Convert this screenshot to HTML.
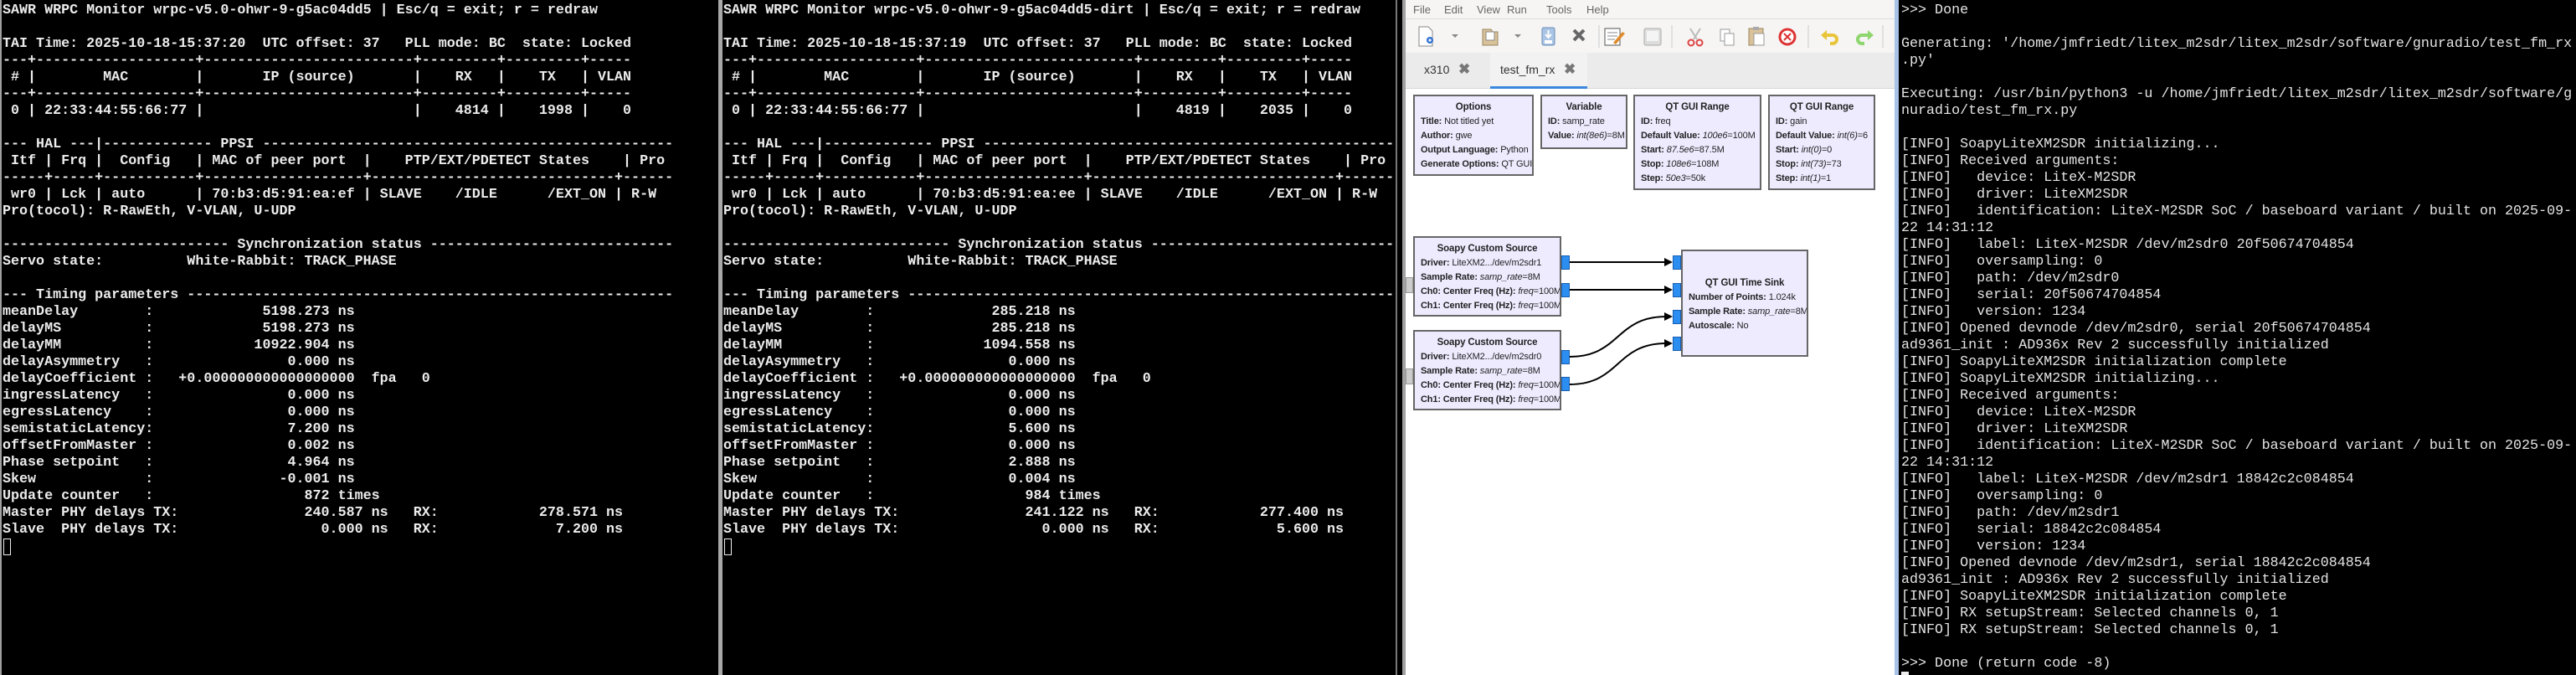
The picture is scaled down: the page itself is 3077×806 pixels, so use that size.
<!DOCTYPE html>
<html><head><meta charset="utf-8">
<style>
*{margin:0;padding:0;box-sizing:border-box}
html,body{width:3077px;height:806px;overflow:hidden;background:#000}
.abs{position:absolute}
pre.t{position:absolute;top:3px;font-family:"Liberation Mono",monospace;font-size:16.7px;line-height:20px;color:#ececec;white-space:pre}
pre.b{font-weight:bold}
.gr{position:absolute;left:1679px;top:0;width:584px;height:806px;background:#fff;font-family:"Liberation Sans",sans-serif}
.menu{position:absolute;left:0;top:0;width:584px;height:23px;background:#f6f5f4;border-bottom:1px solid #ddd;font-size:13px;color:#666}
.menu span{position:absolute;top:4px}
.tool{position:absolute;left:0;top:23px;width:584px;height:40px;background:#f6f5f4}
.tabs{position:absolute;left:0;top:63px;width:584px;height:43px;background:#ebebeb;border-bottom:1px solid #d6d6d6}
.blk{position:absolute;background:#efebff;border:2px solid #666;font-family:"Liberation Sans",sans-serif;font-size:11px;letter-spacing:-0.15px;color:#222;line-height:17px;padding:5px 0 0 7px;white-space:nowrap;overflow:hidden}
.blk .h{text-align:center;font-weight:bold;margin-left:-7px;font-size:11.5px}
.blk b{font-weight:bold}
.port{position:absolute;width:10px;height:17px;background:#2b8ef0;border:1px solid #1a5eb0}
</style></head><body>
<div class="abs" style="left:0;top:0;width:2px;height:806px;background:#a0a0a0"></div>
<pre class="t b" style="left:3px">SAWR WRPC Monitor wrpc-v5.0-ohwr-9-g5ac04dd5 | Esc/q = exit; r = redraw

TAI Time: 2025-10-18-15:37:20  UTC offset: 37   PLL mode: BC  state: Locked
---+-------------------+-------------------------+---------+---------+-----
 # |        MAC        |       IP (source)       |    RX   |    TX   | VLAN
---+-------------------+-------------------------+---------+---------+-----
 0 | 22:33:44:55:66:77 |                         |    4814 |    1998 |    0

--- HAL ---|------------- PPSI -------------------------------------------------
 Itf | Frq |  Config   | MAC of peer port  |    PTP/EXT/PDETECT States    | Pro
-----+-----+-----------+-------------------+-----------------------------+------
 wr0 | Lck | auto      | 70:b3:d5:91:ea:ef | SLAVE    /IDLE      /EXT_ON | R-W
Pro(tocol): R-RawEth, V-VLAN, U-UDP

--------------------------- Synchronization status -----------------------------
Servo state:          White-Rabbit: TRACK_PHASE

--- Timing parameters ----------------------------------------------------------
meanDelay        :             5198.273 ns
delayMS          :             5198.273 ns
delayMM          :            10922.904 ns
delayAsymmetry   :                0.000 ns
delayCoefficient :   +0.000000000000000000  fpa   0
ingressLatency   :                0.000 ns
egressLatency    :                0.000 ns
semistaticLatency:                7.200 ns
offsetFromMaster :                0.002 ns
Phase setpoint   :                4.964 ns
Skew             :               -0.001 ns
Update counter   :                  872 times
Master PHY delays TX:               240.587 ns   RX:            278.571 ns
Slave  PHY delays TX:                 0.000 ns   RX:              7.200 ns</pre>
<div class="abs" style="left:4px;top:643px;width:9px;height:20px;border:1.5px solid #eee"></div>
<div class="abs" style="left:858px;top:0;width:5px;height:806px;background:#a8a8a8"></div>
<pre class="t b" style="left:864px">SAWR WRPC Monitor wrpc-v5.0-ohwr-9-g5ac04dd5-dirt | Esc/q = exit; r = redraw

TAI Time: 2025-10-18-15:37:19  UTC offset: 37   PLL mode: BC  state: Locked
---+-------------------+-------------------------+---------+---------+-----
 # |        MAC        |       IP (source)       |    RX   |    TX   | VLAN
---+-------------------+-------------------------+---------+---------+-----
 0 | 22:33:44:55:66:77 |                         |    4819 |    2035 |    0

--- HAL ---|------------- PPSI -------------------------------------------------
 Itf | Frq |  Config   | MAC of peer port  |    PTP/EXT/PDETECT States    | Pro
-----+-----+-----------+-------------------+-----------------------------+------
 wr0 | Lck | auto      | 70:b3:d5:91:ea:ee | SLAVE    /IDLE      /EXT_ON | R-W
Pro(tocol): R-RawEth, V-VLAN, U-UDP

--------------------------- Synchronization status -----------------------------
Servo state:          White-Rabbit: TRACK_PHASE

--- Timing parameters ----------------------------------------------------------
meanDelay        :              285.218 ns
delayMS          :              285.218 ns
delayMM          :             1094.558 ns
delayAsymmetry   :                0.000 ns
delayCoefficient :   +0.000000000000000000  fpa   0
ingressLatency   :                0.000 ns
egressLatency    :                0.000 ns
semistaticLatency:                5.600 ns
offsetFromMaster :                0.000 ns
Phase setpoint   :                2.888 ns
Skew             :                0.004 ns
Update counter   :                  984 times
Master PHY delays TX:               241.122 ns   RX:            277.400 ns
Slave  PHY delays TX:                 0.000 ns   RX:              5.600 ns</pre>
<div class="abs" style="left:865px;top:643px;width:9px;height:20px;border:1.5px solid #eee"></div>
<div class="abs" style="left:1667px;top:0;width:2px;height:806px;background:#777"></div>
<div class="abs" style="left:1675px;top:0;width:4px;height:806px;background:#a0a0a0"></div>

<div class="gr">
 <div class="menu"><span style="left:9px">File</span><span style="left:46px">Edit</span><span style="left:85px">View</span><span style="left:121px">Run</span><span style="left:168px">Tools</span><span style="left:216px">Help</span></div>
 <div class="tool">
  <svg width="584" height="40" style="position:absolute;left:0;top:0">
   <path d="M16,9 h11 l5,5 v18 h-16z" fill="#fff" stroke="#888"/><circle cx="29" cy="25" r="4" fill="#2f6fd0"/><path d="M27,25h4M29,23v4" stroke="#fff" stroke-width="1.3"/>
   <path d="M55,18 l4,4 4,-4z" fill="#888"/>
   <path d="M92,12 h10 l2,3 h6 v16 h-18z" fill="#d9c29a" stroke="#9a8660"/><rect x="96" y="15" width="10" height="10" fill="#fff" stroke="#888"/>
   <path d="M130,18 l4,4 4,-4z" fill="#888"/>
   <rect x="163" y="10" width="15" height="21" rx="2" fill="#a9c4e4" stroke="#6a8bb3"/><path d="M170.5,13v8M167,18l3.5,4 3.5,-4" stroke="#fff" stroke-width="2" fill="none"/><rect x="166" y="25" width="9" height="4" fill="#fff"/>
   <path d="M201,13 l12,12 M213,13 l-12,12" stroke="#666" stroke-width="4"/>
   <path d="M231,7v27" stroke="#ccc"/>
   <rect x="238" y="11" width="18" height="20" fill="#fff" stroke="#555"/><path d="M241,16h12M241,20h12M241,24h9" stroke="#888"/><path d="M248,28 l11,-13 3,2 -11,13z" fill="#e08a2c"/>
   <rect x="285" y="11" width="20" height="20" rx="2" fill="#ddd" stroke="#aaa"/><rect x="288" y="14" width="14" height="12" fill="#f4f4f4"/>
   <path d="M318,7v27" stroke="#ccc"/>
   <path d="M340,11 l8,13 M352,11 l-8,13" stroke="#bbb" stroke-width="2"/><circle cx="341" cy="28" r="3.5" fill="none" stroke="#d44" stroke-width="2"/><circle cx="351" cy="28" r="3.5" fill="none" stroke="#d44" stroke-width="2"/>
   <rect x="376" y="12" width="11" height="14" fill="#fff" stroke="#999"/><rect x="381" y="17" width="11" height="14" fill="#fff" stroke="#999"/>
   <rect x="410" y="11" width="17" height="20" fill="#d9c29a" stroke="#9a8660"/><rect x="415" y="9" width="7" height="4" fill="#aaa"/><rect x="416" y="17" width="12" height="14" fill="#fff" stroke="#999"/>
   <circle cx="456" cy="21" r="9" fill="#fff" stroke="#d33" stroke-width="3"/><path d="M452,17l8,8M460,17l-8,8" stroke="#d33" stroke-width="2"/>
   <path d="M481,7v27" stroke="#ccc"/>
   <path d="M500,19 h10 a5,5 0 0 1 0,10 h-3" fill="none" stroke="#e8c53a" stroke-width="4"/><path d="M496,19 l7,-6 v12z" fill="#e8c53a"/>
   <path d="M555,19 h-10 a5,5 0 0 0 0,10 h3" fill="none" stroke="#8fd66e" stroke-width="4"/><path d="M559,19 l-7,-6 v12z" fill="#8fd66e"/>
   <path d="M570,7v27" stroke="#ccc"/>
  </svg>
 </div>
 <div class="tabs">
  <span class="abs" style="left:22px;top:12px;font-size:14px;color:#333">x310</span>
  <span class="abs" style="left:63px;top:10px;font-size:17px;color:#777;font-weight:bold">✖</span>
  <div class="abs" style="left:101px;top:0;width:116px;height:43px;background:#f2f2f2;border-bottom:3px solid #3a87dd"></div>
  <span class="abs" style="left:113px;top:12px;font-size:14px;color:#333">test_fm_rx</span>
  <span class="abs" style="left:189px;top:10px;font-size:17px;color:#777;font-weight:bold">✖</span>
 </div>
</div>
<div class="blk" style="left:1688px;top:113px;width:144px;height:97px"><div class="h">Options</div><b>Title:</b> Not titled yet<br><b>Author:</b> gwe<br><b>Output Language:</b> Python<br><b>Generate Options:</b> QT GUI</div>
<div class="blk" style="left:1840px;top:113px;width:104px;height:65px"><div class="h">Variable</div><b>ID:</b> samp_rate<br><b>Value:</b> <i>int(8e6)</i>=8M</div>
<div class="blk" style="left:1951px;top:113px;width:153px;height:114px"><div class="h">QT GUI Range</div><b>ID:</b> freq<br><b>Default Value:</b> <i>100e6</i>=100M<br><b>Start:</b> <i>87.5e6</i>=87.5M<br><b>Stop:</b> <i>108e6</i>=108M<br><b>Step:</b> <i>50e3</i>=50k</div>
<div class="blk" style="left:2112px;top:113px;width:128px;height:114px"><div class="h">QT GUI Range</div><b>ID:</b> gain<br><b>Default Value:</b> <i>int(6)</i>=6<br><b>Start:</b> <i>int(0)</i>=0<br><b>Stop:</b> <i>int(73)</i>=73<br><b>Step:</b> <i>int(1)</i>=1</div>
<div class="abs" style="left:1679px;top:331px;width:9px;height:19px;background:#ccc;border:1px solid #999"></div>
<div class="abs" style="left:1679px;top:440px;width:9px;height:19px;background:#ccc;border:1px solid #999"></div>
<div class="blk" style="left:1688px;top:282px;width:177px;height:96px"><div class="h">Soapy Custom Source</div><b>Driver:</b> LiteXM2.../dev/m2sdr1<br><b>Sample Rate:</b> <i>samp_rate</i>=8M<br><b>Ch0: Center Freq (Hz):</b> <i>freq</i>=100M<br><b>Ch1: Center Freq (Hz):</b> <i>freq</i>=100M</div>
<div class="blk" style="left:1688px;top:394px;width:177px;height:96px"><div class="h">Soapy Custom Source</div><b>Driver:</b> LiteXM2.../dev/m2sdr0<br><b>Sample Rate:</b> <i>samp_rate</i>=8M<br><b>Ch0: Center Freq (Hz):</b> <i>freq</i>=100M<br><b>Ch1: Center Freq (Hz):</b> <i>freq</i>=100M</div>
<div class="blk" style="left:2008px;top:298px;width:152px;height:128px;padding-top:30px"><div class="h">QT GUI Time Sink</div><b>Number of Points:</b> 1.024k<br><b>Sample Rate:</b> <i>samp_rate</i>=8M<br><b>Autoscale:</b> No</div>
<div class="port" style="left:1865px;top:305px"></div>
<div class="port" style="left:1865px;top:338px"></div>
<div class="port" style="left:1865px;top:418px"></div>
<div class="port" style="left:1865px;top:450px"></div>
<div class="port" style="left:1998px;top:305px"></div>
<div class="port" style="left:1998px;top:338px"></div>
<div class="port" style="left:1998px;top:370px"></div>
<div class="port" style="left:1998px;top:402px"></div>
<svg class="abs" style="left:0;top:0" width="3077" height="806">
 <g stroke="#000" stroke-width="2" fill="none">
  <path d="M1875,313 H1990"/><path d="M1875,346 H1990"/>
  <path d="M1875,426 C1935,426 1930,378 1990,378"/>
  <path d="M1875,459 C1935,459 1930,410 1990,410"/>
 </g>
 <g fill="#000">
  <path d="M1998,313 l-10,-5 v10z"/><path d="M1998,346 l-10,-5 v10z"/><path d="M1998,378 l-10,-5 v10z"/><path d="M1998,410 l-10,-5 v10z"/>
 </g>
</svg>
<div class="abs" style="left:2263px;top:0;width:5px;height:806px;background:#a9c2e8"></div>
<pre class="t" style="left:2271px;color:#e4e4e4">&gt;&gt;&gt; Done

Generating: '/home/jmfriedt/litex_m2sdr/litex_m2sdr/software/gnuradio/test_fm_rx
.py'

Executing: /usr/bin/python3 -u /home/jmfriedt/litex_m2sdr/litex_m2sdr/software/g
nuradio/test_fm_rx.py

[INFO] SoapyLiteXM2SDR initializing...
[INFO] Received arguments:
[INFO]   device: LiteX-M2SDR
[INFO]   driver: LiteXM2SDR
[INFO]   identification: LiteX-M2SDR SoC / baseboard variant / built on 2025-09-
22 14:31:12
[INFO]   label: LiteX-M2SDR /dev/m2sdr0 20f50674704854
[INFO]   oversampling: 0
[INFO]   path: /dev/m2sdr0
[INFO]   serial: 20f50674704854
[INFO]   version: 1234
[INFO] Opened devnode /dev/m2sdr0, serial 20f50674704854
ad9361_init : AD936x Rev 2 successfully initialized
[INFO] SoapyLiteXM2SDR initialization complete
[INFO] SoapyLiteXM2SDR initializing...
[INFO] Received arguments:
[INFO]   device: LiteX-M2SDR
[INFO]   driver: LiteXM2SDR
[INFO]   identification: LiteX-M2SDR SoC / baseboard variant / built on 2025-09-
22 14:31:12
[INFO]   label: LiteX-M2SDR /dev/m2sdr1 18842c2c084854
[INFO]   oversampling: 0
[INFO]   path: /dev/m2sdr1
[INFO]   serial: 18842c2c084854
[INFO]   version: 1234
[INFO] Opened devnode /dev/m2sdr1, serial 18842c2c084854
ad9361_init : AD936x Rev 2 successfully initialized
[INFO] SoapyLiteXM2SDR initialization complete
[INFO] RX setupStream: Selected channels 0, 1
[INFO] RX setupStream: Selected channels 0, 1

&gt;&gt;&gt; Done (return code -8)</pre>
<div class="abs" style="left:2271px;top:802px;width:9px;height:4px;background:#eee"></div>
</body></html>
